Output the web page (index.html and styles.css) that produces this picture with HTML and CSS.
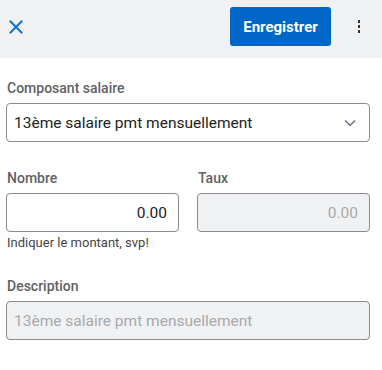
FILE: index.html
```html
<!DOCTYPE html>
<html lang="fr">

<head>
    <meta charset="UTF-8">
    <meta name="viewport" content="width=device-width, initial-scale=1.0">
    <title>Composant salaire</title>
    <link rel="stylesheet" href="styles.css">
</head>

<body>
    <header class="toolbar">
        <button class="icon-button close-button" aria-label="Fermer">
            <svg width="14" height="14" viewBox="0 0 14 14">
                <path d="M1.5 1.5 L12.5 12.5 M12.5 1.5 L1.5 12.5" stroke="#1570cf" stroke-width="2" fill="none" stroke-linecap="square" />
            </svg>
        </button>
        <div class="toolbar-actions">
            <button class="save-button">Enregistrer</button>
            <button class="icon-button more-button" aria-label="Plus">
                <span class="dot"></span>
                <span class="dot"></span>
                <span class="dot"></span>
            </button>
        </div>
    </header>

    <main class="form">
        <div class="field">
            <label class="field-label">Composant salaire</label>
            <div class="select-box">
                <span>13ème salaire pmt mensuellement</span>
                <svg width="12" height="8" viewBox="0 0 12 8">
                    <path d="M1 1.5 L6 6.5 L11 1.5" stroke="#6e6f86" stroke-width="1.5" fill="none" />
                </svg>
            </div>
        </div>

        <div class="field-row">
            <div class="field">
                <label class="field-label">Nombre</label>
                <input class="text-input number" type="text" value="0.00">
                <div class="helper">Indiquer le montant, svp!</div>
            </div>
            <div class="field">
                <label class="field-label">Taux</label>
                <input class="text-input number" type="text" placeholder="0.00" disabled>
            </div>
        </div>

        <div class="field">
            <label class="field-label">Description</label>
            <input class="text-input" type="text" placeholder="13ème salaire pmt mensuellement" disabled>
        </div>
    </main>
</body>

</html>
```

FILE: styles.css
```css
body {
    font-family: Roboto, "Liberation Sans", sans-serif;
    margin: 0;
    background-color: #ffffff;
    color: #222;
}

.toolbar {
    display: flex;
    justify-content: space-between;
    align-items: center;
    height: 58px;
    box-sizing: border-box;
    padding: 7px 21px 12px 9px;
    background-color: #f0f1f3;
}

.icon-button {
    background: none;
    border: none;
    padding: 0;
    cursor: pointer;
}

.close-button {
    display: flex;
    width: 14px;
    height: 14px;
}

.toolbar-actions {
    display: flex;
    align-items: center;
    gap: 26px;
}

.save-button {
    height: 39px;
    width: 101px;
    background-color: #0067c8;
    color: white;
    border: none;
    border-radius: 3px;
    font-family: inherit;
    font-size: 15px;
    font-weight: 700;
    cursor: pointer;
}

.more-button {
    display: flex;
    flex-direction: column;
    align-items: center;
    gap: 2.5px;
    width: 4px;
}

.dot {
    width: 2.5px;
    height: 2.5px;
    background-color: #333;
}

.form {
    padding: 20px 12px 0 6px;
}

.field {
    display: flex;
    flex-direction: column;
    margin-bottom: 26px;
}

.field-label {
    font-size: 14px;
    font-weight: 500;
    line-height: 20px;
    color: #5f6166;
    margin-bottom: 5px;
    padding-left: 1px;
}

.select-box {
    display: flex;
    justify-content: space-between;
    align-items: center;
    height: 39px;
    box-sizing: border-box;
    padding: 0 13px 0 7px;
    border: 1px solid #8a8b90;
    border-radius: 4px;
    font-size: 15.5px;
}

.field-row {
    display: grid;
    grid-template-columns: 1fr 1fr;
    gap: 18px;
}

.field-row .field {
    margin-bottom: 25px;
}

.text-input {
    height: 39px;
    box-sizing: border-box;
    width: 100%;
    padding: 0 11px 0 7px;
    border: 1px solid #8a8b90;
    border-radius: 4px;
    font-family: inherit;
    font-size: 15.5px;
    color: #222;
    background: white;
    outline: none;
}

.text-input:disabled {
    background-color: #f0f1f3;
}

.text-input::placeholder {
    color: #a8a9ad;
}

.number {
    text-align: right;
}

.helper {
    font-size: 13px;
    line-height: 16px;
    color: #444;
    margin-top: 3px;
    padding-left: 1px;
}
```
